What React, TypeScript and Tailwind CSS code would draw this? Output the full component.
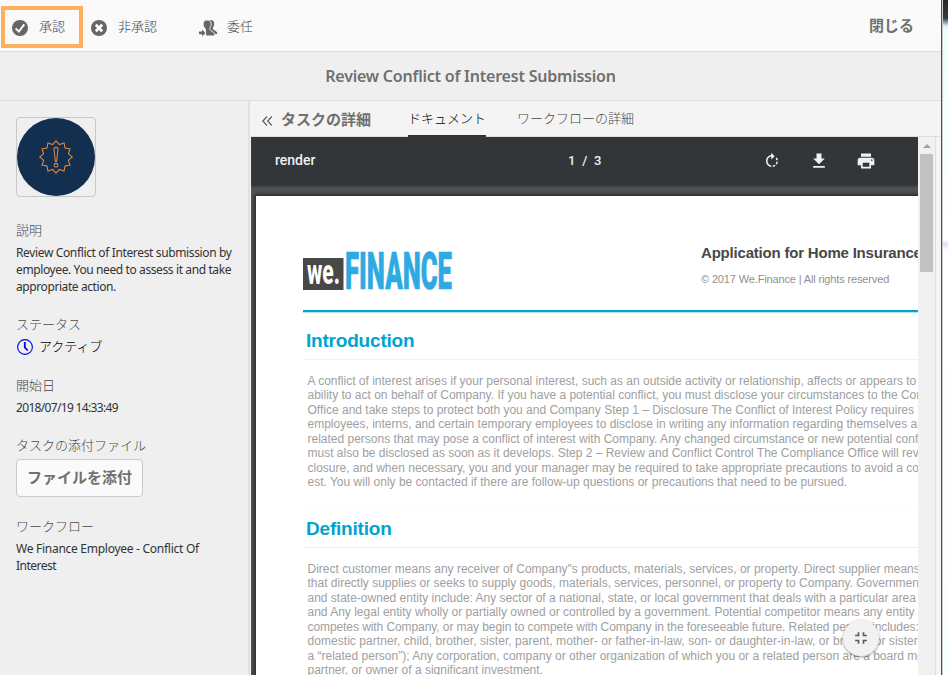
import React from "react";

const JP = "font-['Noto_Sans_CJK_JP',sans-serif]";

type Line = { text: string; tracking?: string };

const intro: Line[] = [
  { text: "A conflict of interest arises if your personal interest, such as an outside activity or relationship, affects or appears to" },
  { text: "ability to act on behalf of Company. If you have a potential conflict, you must disclose your circumstances to the Compliance" },
  { text: "Office and take steps to protect both you and Company Step 1 – Disclosure The Conflict of Interest Policy requires" },
  { text: "employees, interns, and certain temporary employees to disclose in writing any information regarding themselves and" },
  { text: "related persons that may pose a conflict of interest with Company. Any changed circumstance or new potential conflict" },
  { text: "must also be disclosed as soon as it develops. Step 2 – Review and Conflict Control The Compliance Office will review" },
  { text: "closure, and when necessary, you and your manager may be required to take appropriate precautions to avoid a conflict" },
  { text: "est. You will only be contacted if there are follow-up questions or precautions that need to be pursued." },
];

const definition: Line[] = [
  { text: "Direct customer means any receiver of Company\"s products, materials, services, or property. Direct supplier means" },
  { text: "that directly supplies or seeks to supply goods, materials, services, personnel, or property to Company. Government" },
  { text: "and state-owned entity include: Any sector of a national, state, or local government that deals with a particular area" },
  { text: "and Any legal entity wholly or partially owned or controlled by a government. Potential competitor means any entity" },
  { text: "competes with Company, or may begin to compete with Company in the foreseeable future. Related person includes:", tracking: "tracking-[-0.08px]" },
  { text: "domestic partner, child, brother, sister, parent, mother- or father-in-law, son- or daughter-in-law, or brother or sister", tracking: "tracking-[0.05px]" },
  { text: "a “related person”); Any corporation, company or other organization of which you or a related person are a board member" },
  { text: "partner, or owner of a significant investment." },
];

function TopBar() {
  return (
    <header className={`flex h-[52px] shrink-0 items-start border-b border-[#dedede] bg-[#fafafa] text-[13px] leading-[20px] font-light text-[#484848] ${JP}`}>
      <div className="mt-[6px] ml-px flex h-[42px] w-[82px] items-center border-4 border-[#ffaf60] pl-[7px]">
        <svg className="mt-[2px] h-4 w-4" viewBox="0 0 16 16">
          <circle cx="8" cy="8" r="8" fill="#666" />
          <path d="M3.6 8.4 6.8 11.6 12.3 4.4" fill="none" stroke="#fff" strokeWidth="2" />
        </svg>
        <span className="mb-[2px] ml-[11px]">承認</span>
      </div>
      <div className="ml-[8px] flex h-[54px] items-center">
        <svg className="mt-[2px] h-4 w-4" viewBox="0 0 16 16">
          <circle cx="8" cy="8" r="8" fill="#666" />
          <path d="M4.8 4.8 11.2 11.2M11.2 4.8 4.8 11.2" fill="none" stroke="#fff" strokeWidth="2.8" />
        </svg>
        <span className="mb-[2px] ml-[11px]">非承認</span>
      </div>
      <div className="ml-[42px] flex h-[54px] items-center">
        <svg className="mt-[2px] h-[18px] w-[19px]" viewBox="0 0 19 18" fill="#666">
          <path d="M11.6 1C14 1 15.3 2.6 15.2 4.9 15.1 6.8 14.3 7.6 13.9 8.8 13.7 10 14 10.5 15 11 16.8 11.9 18.2 12.6 18.3 15H14L9 9V2Z" />
          <path d="M8 .9C10.7.9 12.3 2.5 12.2 5.1 12.1 7.1 11.2 8.2 10.9 9.4 10.7 10.5 11 11.2 12.2 11.9 14.4 13.1 15.9 13.7 16 16.9H6.8L6.6 11.8 6 9.3C5 8.4 4.1 7 4.1 4.9 4.1 2.4 5.6.9 8 .9Z" stroke="#fafafa" strokeWidth=".9" />
          <path d="M0 12.6H3V10.4L6.4 14 3 17.4V15.3H0Z" />
        </svg>
        <span className="mb-[2px] ml-[9px]">委任</span>
      </div>
      <span className="mt-[15px] mr-[27px] ml-auto text-[15px] font-bold text-[#707070]">閉じる</span>
    </header>
  );
}

function Burst() {
  const pts: string[] = [];
  for (let i = 0; i < 24; i++) {
    const r = i % 2 === 0 ? 16.2 : 12.8;
    const a = (i * Math.PI) / 12 - Math.PI / 2;
    pts.push(`${(39 + r * Math.cos(a)).toFixed(2)},${(39 + r * Math.sin(a)).toFixed(2)}`);
  }
  return (
    <svg className="h-[78px] w-[78px]" viewBox="0 0 78 78">
      <circle cx="39" cy="39" r="39" fill="#122f50" />
      <g fill="none" stroke="#d9863b" strokeWidth="1.1">
        <polygon points={pts.join(" ")} />
        <path d="M37 31.5Q37 29.3 39 29.3T41 31.5L39.6 43.5H38.4Z" />
        <circle cx="39" cy="47.3" r="1.9" />
      </g>
    </svg>
  );
}

function Label({ children }: { children: React.ReactNode }) {
  return <div className={`h-5 text-[13px] leading-5 font-light whitespace-nowrap text-[#484848] ${JP}`}>{children}</div>;
}

function Sidebar() {
  const body = "font-['Noto_Sans',sans-serif] text-[12px] leading-[17px] whitespace-nowrap text-[#323232]";
  return (
    <aside className="flex w-[250px] shrink-0 flex-col border-r-2 border-[#e1e1e1] bg-[#efefef] pt-4 pl-4">
      <div className="h-20 w-20 rounded border border-[#c8c8c8]">
        <Burst />
      </div>
      <div className="mt-[23px]"><Label>説明</Label></div>
      <div className={`mt-[4px] ${body}`}>
        <div className="tracking-[-0.36px]">Review Conflict of Interest submission by</div>
        <div className="tracking-[-0.39px]">employee. You need to assess it and take</div>
        <div className="tracking-[-0.41px]">appropriate action.</div>
      </div>
      <div className="mt-[19px]"><Label>ステータス</Label></div>
      <div className={`mt-[2px] flex h-5 items-center text-[13px] font-light text-black ${JP}`}>
        <svg className="mt-[2px] ml-px h-4 w-4" viewBox="0 0 16 16" fill="none" stroke="#0000f0">
          <circle cx="8" cy="8" r="7.4" strokeWidth="1.1" />
          <path d="M7.8 3V8.4L10.7 11.5" strokeWidth="1.8" />
        </svg>
        <span className="mb-px ml-[6px]">アクティブ</span>
      </div>
      <div className="mt-[19px]"><Label>開始日</Label></div>
      <div className={`mt-[4px] tracking-[-0.67px] ${body}`}>2018/07/19 14:33:49</div>
      <div className="mt-[19px]"><Label>タスクの添付ファイル</Label></div>
      <button className={`mt-[4px] h-[38px] w-[127px] rounded border border-[#cacaca] bg-[#fafafa] pb-[2px] text-[15px] font-bold whitespace-nowrap text-[#707070] ${JP}`}>
        ファイルを添付
      </button>
      <div className="mt-[19px]"><Label>ワークフロー</Label></div>
      <div className={`mt-[4px] ${body}`}>
        <div className="tracking-[-0.27px]">We Finance Employee - Conflict Of</div>
        <div className="tracking-[-0.5px]">Interest</div>
      </div>
    </aside>
  );
}

function Tabs() {
  return (
    <nav className={`flex h-9 shrink-0 items-start border-b border-[#dedede] bg-[#f4f4f4] text-[13px] leading-5 font-light whitespace-nowrap ${JP}`}>
      <svg className="mt-[15px] ml-[12px] h-[10px] w-[11px]" viewBox="0 0 11 10" fill="none" stroke="#606060" strokeWidth="1.2">
        <path d="M5 .5.9 5 5 9.5M9.8.5 5.7 5 9.8 9.5" />
      </svg>
      <span className="mt-[8px] ml-[8px] text-[15px] font-bold text-[#707070]">タスクの詳細</span>
      <span className="mt-[7px] ml-[37px] h-[29px] w-[78px] border-b-2 border-[#323232] text-black">ドキュメント</span>
      <span className="mt-[7px] ml-[31px] text-[#484848]">ワークフローの詳細</span>
    </nav>
  );
}

function ViewerBar() {
  return (
    <div className="relative z-10 flex h-12 shrink-0 items-center bg-[#323639] pb-px font-['Roboto',sans-serif] text-[13px] font-medium text-[#f1f1f1] shadow-[0_1px_4px_rgba(0,0,0,0.5)]">
      <span className="ml-6 w-[293px] text-[14px]">render</span>
      <span className="w-[195px] tracking-[0.1px] whitespace-pre">1  /  3</span>
      <svg className="h-[18px] w-[18px]" viewBox="0 0 24 24" fill="#f1f1f1">
        <path d="M15.55 5.55 11 1v3.07C7.06 4.56 4 7.92 4 12s3.05 7.44 7 7.93v-2.02c-2.84-.48-5-2.94-5-5.91s2.16-5.43 5-5.91V10l4.55-4.45zM19.93 11c-.17-1.39-.72-2.73-1.62-3.89l-1.42 1.42c.54.75.88 1.6 1.02 2.47h2.02zM13 17.9v2.02c1.39-.17 2.74-.71 3.9-1.61l-1.44-1.44c-.75.54-1.59.89-2.46 1.03zm3.89-2.42 1.42 1.41c.9-1.16 1.45-2.5 1.62-3.89h-2.02c-.14.87-.48 1.72-1.02 2.48z" />
      </svg>
      <svg className="ml-[28px] h-5 w-5" viewBox="0 0 24 24" fill="#f1f1f1">
        <path d="M19 9h-4V3H9v6H5l7 7 7-7zM5 18v2h14v-2H5z" />
      </svg>
      <svg className="ml-[27px] h-5 w-5" viewBox="0 0 24 24" fill="#f1f1f1">
        <path d="M19 8H5c-1.66 0-3 1.34-3 3v6h4v4h12v-4h4v-6c0-1.66-1.34-3-3-3zm-3 11H8v-5h8v5zm3-7c-.55 0-1-.45-1-1s.45-1 1-1 1 .45 1 1-.45 1-1 1zm-1-9H6v4h12V3z" />
      </svg>
    </div>
  );
}

function Paragraph({ lines }: { lines: Line[] }) {
  return (
    <div className="ml-[4.5px] text-[12px] leading-[14.43px] whitespace-nowrap text-[#a0a0a0]">
      {lines.map((l) => (
        <div key={l.text} className={l.tracking}>{l.text}</div>
      ))}
    </div>
  );
}

function DocumentPage() {
  return (
    <div className="mt-[11px] ml-[5px] h-[490px] w-[720px] shrink-0 bg-white pl-[47px] font-['Liberation_Sans',Arial,sans-serif] shadow-[0_0_4px_2px_rgba(0,0,0,0.5)]">
      <div className="flex h-[114px] items-start">
        <svg className="mt-[55px] h-[40px] w-[151px] overflow-visible" viewBox="0 0 151 40">
          <rect x="0" y="7" width="40.5" height="32" fill="#484848" />
          <text x="4" y="33" textLength="33" lengthAdjust="spacingAndGlyphs" fontFamily="Roboto" fontWeight="800" fontSize="35" fill="#fff">we.</text>
          <text x="42" y="38" textLength="107" lengthAdjust="spacingAndGlyphs" fontFamily="Roboto" fontWeight="900" fontSize="51" fill="#2eaae2" stroke="#2eaae2" strokeWidth=".6">FINANCE</text>
        </svg>
        <div className="mt-[47px] ml-[247px] whitespace-nowrap">
          <div className="text-[15px] leading-5 font-bold tracking-[-0.2px] text-[#484848]">Application for Home Insurance</div>
          <div className="mt-[7px] text-[11px] leading-[18px] tracking-[-0.14px] text-[#909090]">© 2017 We.Finance | All rights reserved</div>
        </div>
      </div>
      <div className="h-[3px] border-b border-[#b0e2f0] bg-[#00a4cf]" />
      <h2 className="mt-[16px] ml-[3px] h-[24px] text-[19px] leading-[24px] font-bold tracking-[-0.2px] text-[#00a4cf]">Introduction</h2>
      <div className="mt-[6px] mb-[14px] h-px bg-[#edf2f2]" />
      <Paragraph lines={intro} />
      <div className="mt-[15px] h-px bg-[#fafafa]" />
      <h2 className="mt-[11px] ml-[3px] h-[24px] text-[19px] leading-[24px] font-bold tracking-[-0.2px] text-[#00a4cf]">Definition</h2>
      <div className="mt-[6px] mb-[14.4px] h-px bg-[#e9f0f0]" />
      <Paragraph lines={definition} />
    </div>
  );
}

function Viewer() {
  return (
    <section className="flex min-h-0 flex-1 pl-px">
      <div className="relative flex w-[667px] shrink-0 flex-col overflow-hidden bg-[#525659]">
        <ViewerBar />
        <DocumentPage />
        <div className="absolute top-[483px] left-[592px] z-10 flex h-9 w-9 items-center justify-center rounded-full bg-[#f2f2f2] shadow-[0_1px_3px_rgba(0,0,0,0.4)]">
          <svg className="h-5 w-5" viewBox="0 0 24 24" fill="#5a5a5a">
            <path d="M5 16h3v3h2v-5H5v2zm3-8H5v2h5V5H8v3zm6 11h2v-3h3v-2h-5v5zm2-11V5h-2v5h5V8h-3z" />
          </svg>
        </div>
      </div>
      <div className="flex w-[18px] shrink-0 flex-col items-center border-r border-[#dedede] bg-[#f1f1f1]">
        <div className="mt-[7px] h-0 w-0 border-x-4 border-b-4 border-x-transparent border-b-[#a3a3a3]" />
        <div className="mt-[6px] h-[118px] w-[13px] bg-[#c1c1c1]" />
      </div>
    </section>
  );
}

export default function App() {
  return (
    <div className="flex h-[675px] w-[948px] overflow-hidden bg-white">
      <main className="flex w-[941px] shrink-0 flex-col">
        <TopBar />
        <h1 className="flex h-[49px] shrink-0 items-center justify-center border-b border-[#dedede] bg-[#efefef] pb-px font-['Noto_Sans',sans-serif] text-[16px] font-semibold tracking-[-0.22px] text-[#707070]">
          Review Conflict of Interest Submission
        </h1>
        <div className="flex min-h-0 flex-1">
          <Sidebar />
          <div className="flex min-w-0 flex-1 flex-col bg-[#f4f4f4]">
            <Tabs />
            <Viewer />
          </div>
        </div>
      </main>
      <div className="w-px bg-[#505050]" />
      <div className="w-px bg-[#c3cccc]" />
      <div className="flex-1 bg-[linear-gradient(to_bottom,#23282c_0,#343a3e_18px,#dff0fa_26px,#edfffd_32px,#f4ffff_110px,#fff_240px,#d3e3fb_244px,#fff_250px,#f8ffff_100%)]" />
    </div>
  );
}
